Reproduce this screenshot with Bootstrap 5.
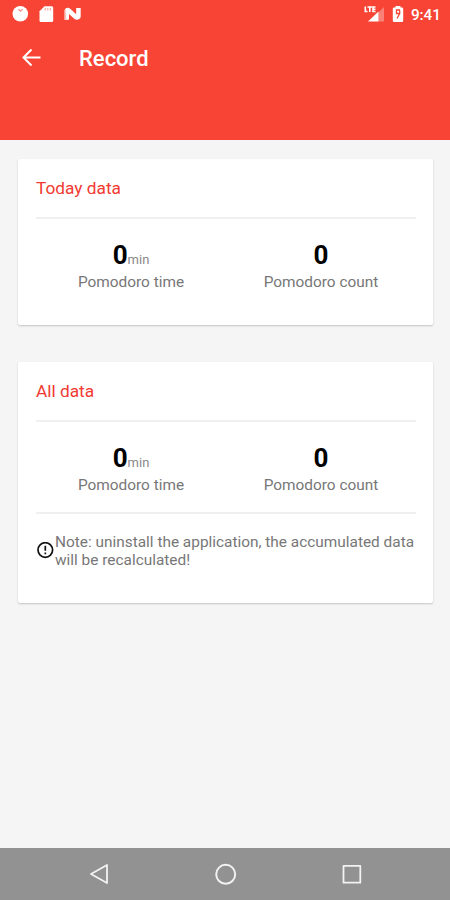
<!DOCTYPE html>
<html lang="en">
<head>
<meta charset="utf-8">
<meta name="viewport" content="width=device-width, initial-scale=1">
<title>Record</title>
<link href="https://cdn.jsdelivr.net/npm/bootstrap@5.3.0/dist/css/bootstrap.min.css" rel="stylesheet">
<style>
body{font-family:Roboto,"Liberation Sans",sans-serif;background:#f5f5f5;color:#777}
svg{display:block;flex:none}
.screen{height:900px;overflow:hidden}
.app-head{height:140px;background:#f84435;flex:none}
.status{height:28px;padding:0 9px 0 12px}
.clock{font-size:15.3px;font-weight:500;line-height:28px;padding-top:1px;margin-left:7px}
.toolbar{height:60px;padding-left:21px;gap:37px}
.title{font-size:22px;font-weight:500;line-height:60px;padding-top:1px}
.content{padding:19px 17px 0 18px;gap:37px}
.panel{border:0;border-radius:2px;box-shadow:0 1px 2px rgba(0,0,0,.2);padding:0 17px 0 18px}
.panel-today{height:166px}
.panel-all{height:241px}
.heading{height:58px;line-height:59px;font-size:17.3px;color:#f03a32}
.rule{height:2px;background:#f0f0f0}
.figure-line{font-size:26px;line-height:32px;height:32px;font-weight:700;color:#000;margin-top:20px}
.unit{font-size:13px;line-height:1;font-weight:400;color:#888}
.label{font-size:15.4px;line-height:20px;margin-top:1px}
.rule-note{margin-top:17px}
.note{font-size:15.4px;line-height:18px;margin-top:19px}
.navkeys{height:52px;background:#929292;flex:none;padding:0 87px 0 88px}
</style>
<script src="https://cdn.jsdelivr.net/npm/bootstrap@5.3.0/dist/js/bootstrap.bundle.min.js"></script>
</head>
<body>
<div class="screen d-flex flex-column">
  <header class="app-head text-white">
    <div class="status d-flex align-items-center justify-content-between">
      <div class="d-flex align-items-center">
        <svg width="17" height="18" viewBox="0 0 17 18"><circle cx="8.300" cy="8.800" r="7.800" fill="#fff"/><path d="M6.500 4.200l2 2 2-2" stroke="#f8938a" stroke-width="1.300" fill="none"/></svg>
        <svg class="ms-2" width="19" height="18" viewBox="0 0 19 18"><path d="M7.500 1.200h7.200q1.500 0 1.500 1.500v12.800q0 1.500-1.500 1.500H4q-1.500 0-1.500-1.500V6.200z" fill="#fff"/><path d="M8.200 3v2.500M10.800 3v2.500M13.400 3v2.500" stroke="#f8a69e" stroke-width="1.200"/></svg>
        <svg class="ms-2" width="18" height="18" viewBox="0 0 18 18"><path d="M.3 5q1.500-2 4-1v11h-4zM12 3h5v9q-1 3-5 2z" fill="#fcc4be"/><path d="M1.500 3.500Q4 1.800 6.500 4l6 5.500V3H16v10q-2 3-5.500 1L5 9v5.500H2.500z" fill="#fff"/></svg>
      </div>
      <div class="d-flex align-items-center">
        <svg width="20" height="18" viewBox="0 0 20 18"><path d="M14.500 7.500L20 2v14.500h-5.500z" fill="#fa8177"/><path d="M4 16.500L14.500 6.500v10z" fill="#fff"/><path d="M1.300 1.500v5h2.200M3.500 2h4.500M5.800 2v5M11.500 2H9v4.500h2.500M9 4.200h2.500" stroke="#fff" stroke-width="1.600" fill="none"/></svg>
        <svg class="ms-2" width="12" height="18" viewBox="0 0 12 18"><path d="M3.500 1h5v1.500H10q1.200 0 1.200 1.200v12q0 1.200-1.200 1.200H2q-1.200 0-1.200-1.200v-12q0-1.200 1.200-1.200h1.500z" fill="#fff"/><path d="M8 5H4.500v3.500h3.200V5.500M7.700 8.500L5 13.500" stroke="#f84435" stroke-width="1.300" fill="none"/></svg>
        <span class="clock">9:41</span>
      </div>
    </div>
    <div class="toolbar d-flex align-items-center">
      <svg width="21" height="20" viewBox="0 0 21 20" fill="none" stroke="#fff" stroke-width="2"><path d="M19.500 9.500H2.500M10.500 1.500l-8 8 8 8"/></svg>
      <span class="title">Record</span>
    </div>
  </header>
  <main class="content flex-grow-1 d-flex flex-column">
    <section class="card panel panel-today">
      <div class="heading">Today data</div>
      <div class="rule"></div>
      <div class="row g-0 text-center">
        <div class="col-6"><div class="figure-line">0<span class="unit">min</span></div><div class="label">Pomodoro time</div></div>
        <div class="col-6"><div class="figure-line">0</div><div class="label">Pomodoro count</div></div>
      </div>
    </section>
    <section class="card panel panel-all">
      <div class="heading">All data</div>
      <div class="rule"></div>
      <div class="row g-0 text-center">
        <div class="col-6"><div class="figure-line">0<span class="unit">min</span></div><div class="label">Pomodoro time</div></div>
        <div class="col-6"><div class="figure-line">0</div><div class="label">Pomodoro count</div></div>
      </div>
      <div class="rule rule-note"></div>
      <div class="note d-flex align-items-center">
        <svg width="19" height="18" viewBox="0 0 19 18"><circle cx="9.300" cy="8" r="7.300" fill="none" stroke="#111" stroke-width="1.700"/><path d="M9.300 3.700v5M9.300 10.500v1.800" stroke="#111" stroke-width="1.700"/></svg>
        <div class="text-nowrap">Note: uninstall the application, the accumulated data<br>will be recalculated!</div>
      </div>
    </section>
  </main>
  <footer class="navkeys d-flex align-items-center justify-content-between">
    <svg width="22" height="22" viewBox="0 0 22 22" fill="none" stroke="#f2f2f2" stroke-width="1.800" stroke-linejoin="round"><path d="M19 2v18L3 11z"/></svg>
    <svg width="22" height="22" viewBox="0 0 22 22" fill="none" stroke="#f2f2f2" stroke-width="2"><circle cx="10.700" cy="11.300" r="9.500"/></svg>
    <svg width="22" height="22" viewBox="0 0 22 22" fill="none" stroke="#f2f2f2" stroke-width="1.800" stroke-linejoin="round"><path d="M2.500 2.900h16.800v16.800H2.500z"/></svg>
  </footer>
</div>
</body>
</html>
